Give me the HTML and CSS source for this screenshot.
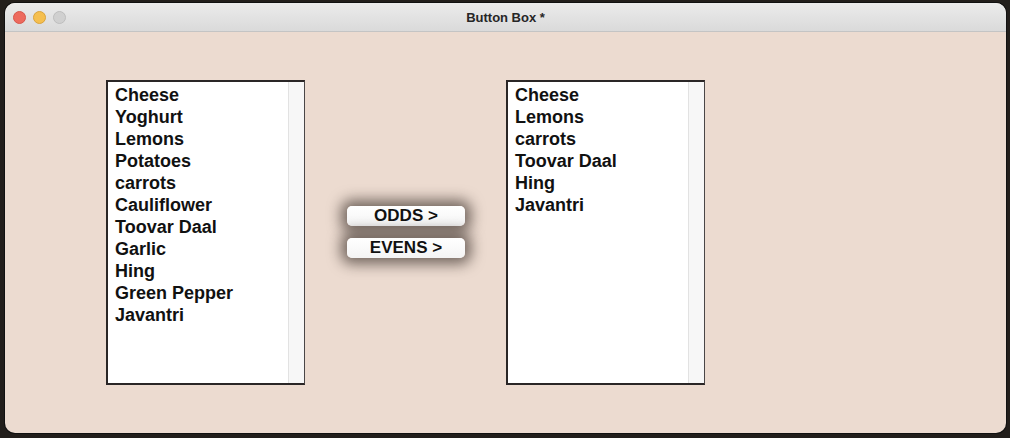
FILE: index.html
```html
<!DOCTYPE html>
<html>
<head>
<meta charset="utf-8">
<link rel="stylesheet" href="styles.css">
</head>
<body>
<div class="window">
  <div class="titlebar">
    <div class="lights">
      <span class="light red"></span>
      <span class="light yellow"></span>
      <span class="light gray"></span>
    </div>
    <div class="title">Button Box *</div>
  </div>
  <div class="content">
    <div class="listbox">
      <ul class="items">
        <li>Cheese</li>
        <li>Yoghurt</li>
        <li>Lemons</li>
        <li>Potatoes</li>
        <li>carrots</li>
        <li>Cauliflower</li>
        <li>Toovar Daal</li>
        <li>Garlic</li>
        <li>Hing</li>
        <li>Green Pepper</li>
        <li>Javantri</li>
      </ul>
      <div class="scrollbar"></div>
    </div>
    <div class="buttons">
      <button class="btn">ODDS &gt;</button>
      <button class="btn">EVENS &gt;</button>
    </div>
    <div class="listbox">
      <ul class="items">
        <li>Cheese</li>
        <li>Lemons</li>
        <li>carrots</li>
        <li>Toovar Daal</li>
        <li>Hing</li>
        <li>Javantri</li>
      </ul>
      <div class="scrollbar"></div>
    </div>
  </div>
</div>
</body>
</html>
```

FILE: styles.css
```css
html, body {
  margin: 0;
  padding: 0;
  background: #221e1b;
  width: 1010px;
  height: 438px;
  overflow: hidden;
}

.window {
  margin: 3px 0 0 5px;
  width: 1001px;
  height: 430px;
  border-radius: 10px;
  overflow: hidden;
  background: #ecdbd0;
  display: flex;
  flex-direction: column;
  box-shadow: 0 0 0 1px #111;
}

.titlebar {
  height: 28px;
  flex: none;
  background: linear-gradient(#ebebeb, #dadada);
  border-bottom: 1px solid #c4c4c4;
  display: flex;
  align-items: center;
  position: relative;
}

.lights {
  display: flex;
  gap: 7px;
  padding-left: 8px;
}

.light {
  width: 13px;
  height: 13px;
  border-radius: 50%;
  display: block;
  box-sizing: border-box;
}
.red { background: #ed6a5e; border: 0.5px solid #d6564b; }
.yellow { background: #f5bf4f; border: 0.5px solid #d9a33c; }
.gray { background: #d0d0d0; border: 0.5px solid #bdbdbd; }

.title {
  position: absolute;
  left: 0;
  right: 0;
  text-align: center;
  font-family: "Liberation Sans", Arial, sans-serif;
  font-weight: bold;
  font-size: 13px;
  color: #262626;
}

.content {
  flex: 1;
  display: flex;
  align-items: flex-start;
  padding: 48px 0 0 101px;
}

.listbox {
  width: 199px;
  height: 305px;
  box-sizing: border-box;
  border: 2px solid #2a2626;
  border-right: 1px solid #4a4646;
  background: #fff;
  display: flex;
}

.items {
  list-style: none;
  margin: 0;
  padding: 2px 0 0 7px;
  flex: 1;
  font-family: "Liberation Sans", Arial, sans-serif;
  font-weight: bold;
  font-size: 18px;
  line-height: 22px;
  color: #111;
}

.scrollbar {
  width: 15px;
  background: #f7f7f7;
  border-left: 1px solid #e2e2e2;
}

.buttons {
  display: flex;
  flex-direction: column;
  gap: 12px;
  margin: 126px 41px 0 42px;
}

.btn {
  width: 118px;
  height: 20px;
  border: none;
  border-radius: 5px;
  background: linear-gradient(#ffffff, #f4f4f4);
  padding: 0;
  font-family: "Liberation Sans", Arial, sans-serif;
  font-weight: bold;
  font-size: 17px;
  line-height: 20px;
  color: #111;
  box-shadow: 0 0 14px 6px rgba(35, 25, 20, 0.6);
}
```
